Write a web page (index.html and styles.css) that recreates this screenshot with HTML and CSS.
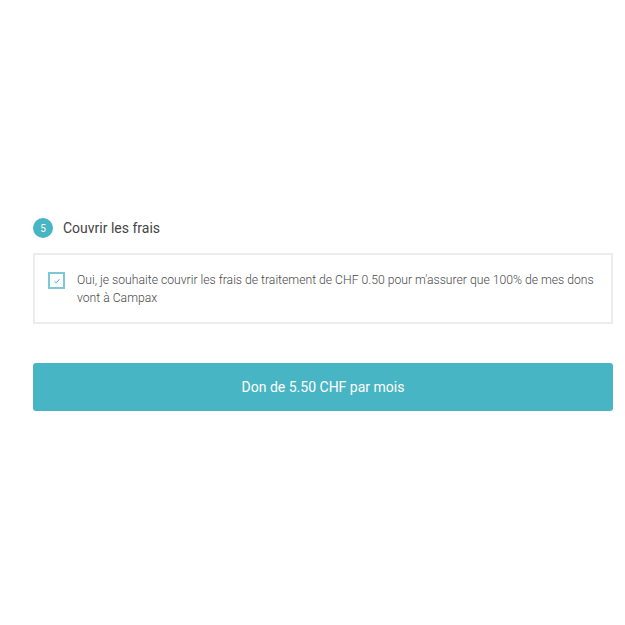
FILE: index.html
```html
<!DOCTYPE html>
<html lang="fr">
<head>
<meta charset="UTF-8">
<meta name="viewport" content="width=device-width, initial-scale=1.0">
<title>Don</title>
<link rel="stylesheet" href="styles.css">
</head>
<body>

<div class="container">
    <div class="step">
        <span class="step-num">5</span>
        <span class="step-title">Couvrir les frais</span>
    </div>

    <label class="fees-box">
        <span class="checkbox">
            <svg width="8" height="8" viewBox="0 0 8 8"><path d="M1.5 4.3 L3.2 5.8 L6.5 2.2" fill="none" stroke="#48b5c4" stroke-width="1"/></svg>
        </span>
        <span class="fees-text">Oui, je souhaite couvrir les frais de traitement de CHF 0.50 pour m'assurer que 100% de mes dons vont à Campax</span>
    </label>

    <button class="donate">Don de 5.50 CHF par mois</button>
</div>

</body>
</html>
```

FILE: styles.css
```css
body {
    font-family: Roboto, 'Liberation Sans', sans-serif;
    margin: 0;
    padding: 0;
    background: #ffffff;
}

.container {
    width: 580px;
    margin-left: 33px;
    padding-top: 218px;
}

.step {
    display: flex;
    align-items: center;
    gap: 10px;
    height: 20px;
}

.step-num {
    width: 20px;
    height: 20px;
    border-radius: 50%;
    background-color: #48b5c4;
    color: #ffffff;
    font-size: 10px;
    display: flex;
    align-items: center;
    justify-content: center;
}

.step-title {
    font-size: 14px;
    color: #444444;
}

.fees-box {
    display: flex;
    align-items: flex-start;
    gap: 12px;
    margin-top: 15px;
    padding: 16px 10px 15px 13px;
    border: 2px solid #ececec;
}

.checkbox {
    flex: none;
    width: 13px;
    height: 13px;
    border: 2px solid #7cc8d3;
    margin-top: 1px;
    display: flex;
    align-items: center;
    justify-content: center;
}

.fees-text {
    font-size: 12.2px;
    font-weight: 300;
    line-height: 18px;
    color: #4a4a4a;
}

.donate {
    display: block;
    width: 580px;
    height: 48px;
    margin-top: 39px;
    border: none;
    border-radius: 3px;
    background-color: #48b5c4;
    color: #ffffff;
    font-family: Roboto, 'Liberation Sans', sans-serif;
    font-size: 14px;
}
```
